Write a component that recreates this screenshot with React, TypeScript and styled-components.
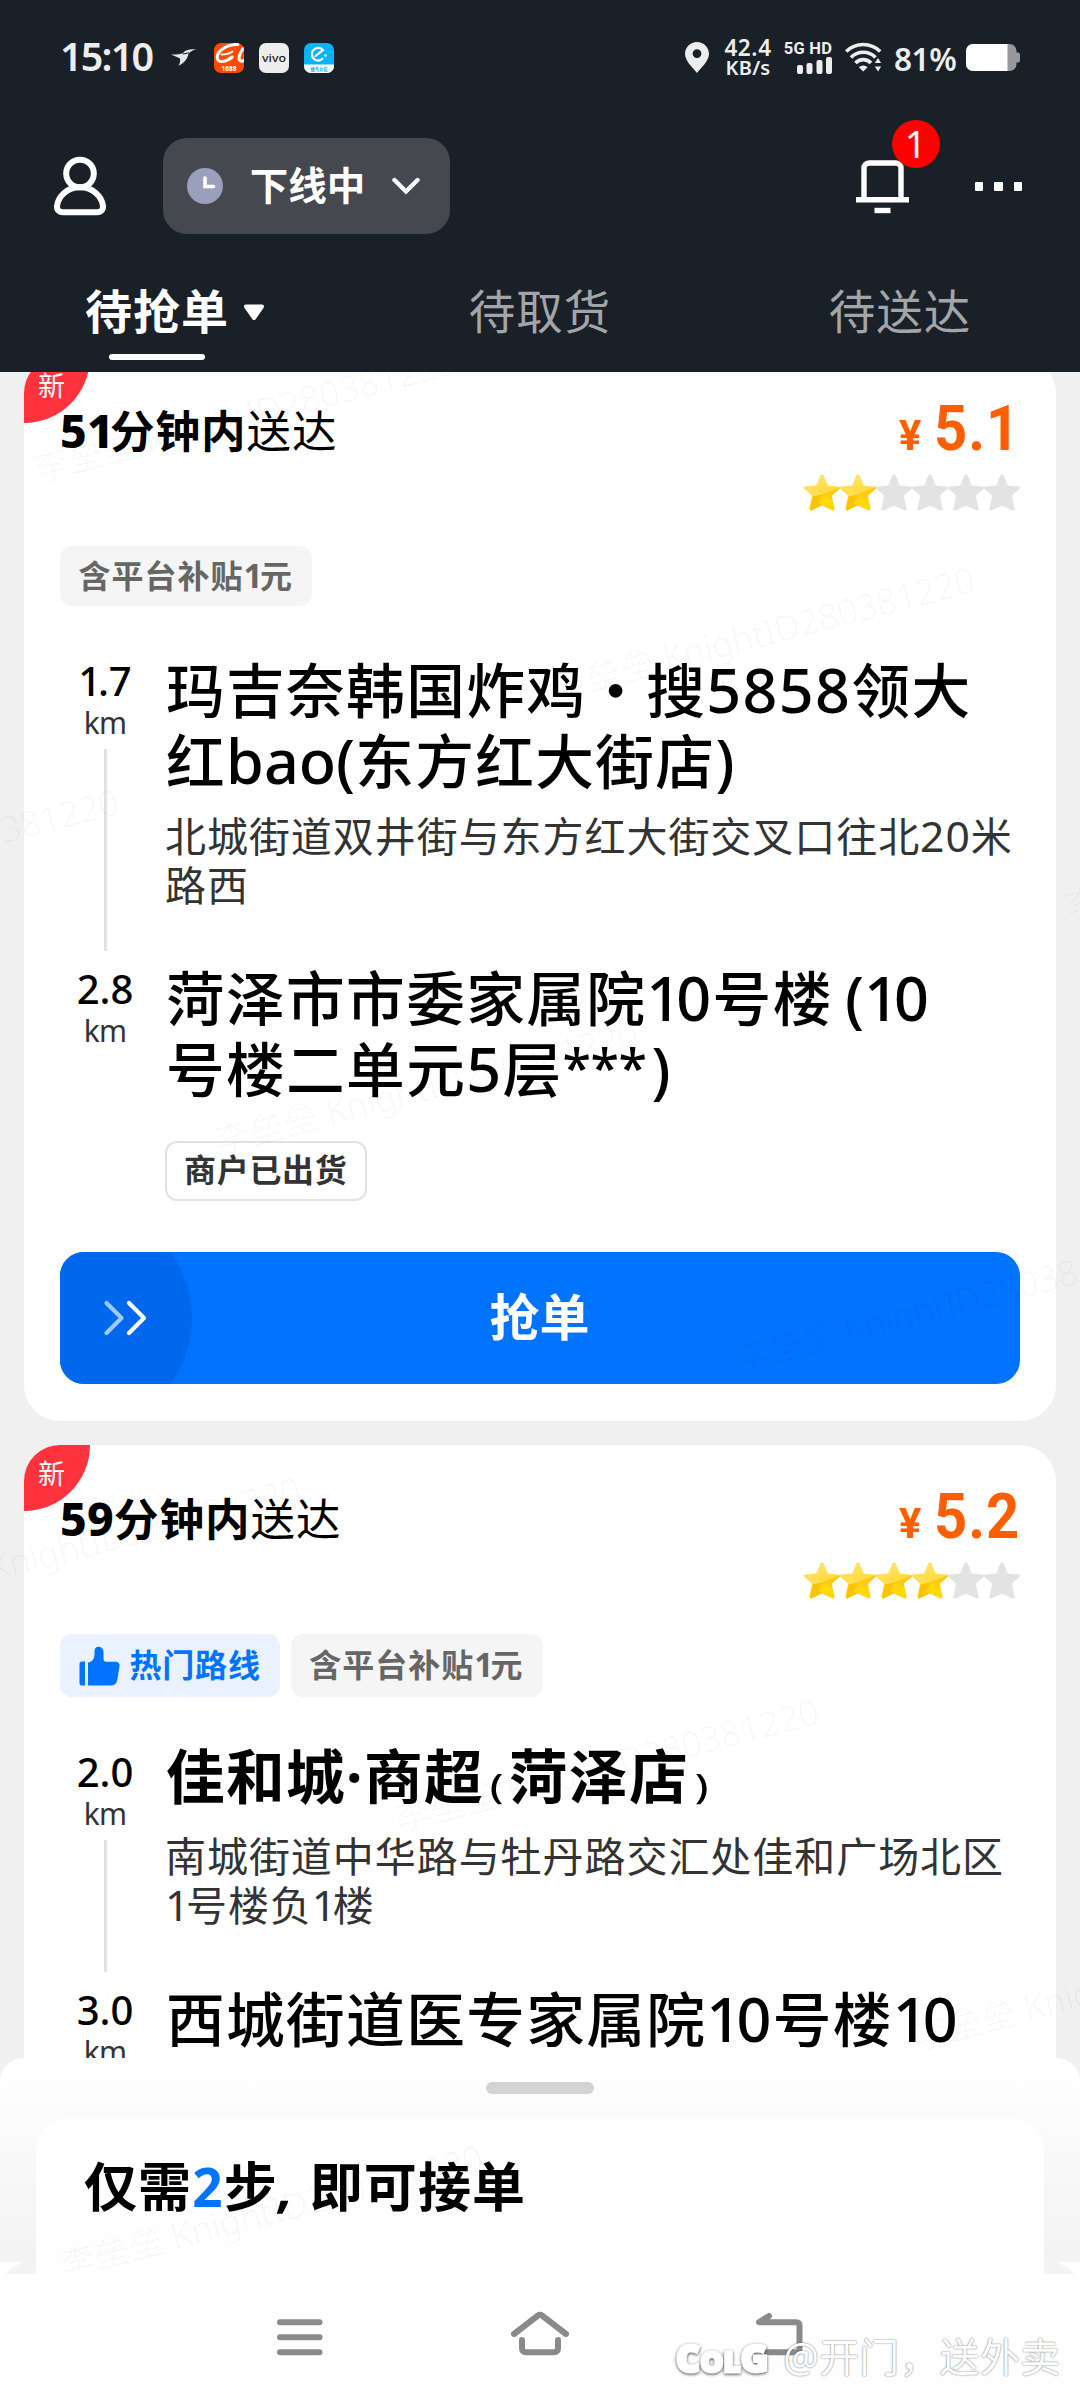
import React from "react";
import styled, { createGlobalStyle } from "styled-components";

const Global = createGlobalStyle`
  * { box-sizing: border-box; }
  html, body { margin: 0; padding: 0; background: #fff; }
  body {
    font-family: "Noto Sans", "Noto Sans CJK SC", sans-serif;
    -webkit-font-smoothing: antialiased;
  }
  svg { display: block; flex: none; }
`;

const Screen = styled.div`
  position: relative;
  width: 1080px;
  height: 2400px;
  overflow: hidden;
  display: flex;
  flex-direction: column;
  background: #f0f0f0;
`;

/* ---------- mixed script text ---------- */

const Latin = styled.span`
  font-size: 1.04em;
  line-height: 1;
`;

const One = styled.span`
  letter-spacing: -0.08em;
`;

const Letters = styled.span`
  letter-spacing: 0;
`;

const Asterisks = styled.span`
  display: inline-block;
  margin-right: 5px;
  font-size: 0.85em;
  line-height: 1;
  letter-spacing: -0.4px;
  transform: translateY(-5px);
`;

function Mix({ children }: { children: string }) {
  return (
    <>
      {children.split(/([\x20-\x7e]+)/).map((run, i) =>
        i % 2 ? (
          <Latin key={i}>
            {run.split(/(1|[a-z(]+|\*+)/).map((c, j) => {
              if (c === "1") return <One key={j}>1</One>;
              if (c.startsWith("*")) return <Asterisks key={j}>{c}</Asterisks>;
              return j % 2 ? <Letters key={j}>{c}</Letters> : c;
            })}
          </Latin>
        ) : (
          run
        )
      )}
    </>
  );
}

/* ---------- header ---------- */

const Header = styled.header`
  position: relative;
  z-index: 2;
  height: 372px;
  flex: none;
  display: flex;
  flex-direction: column;
  background: #1a2028;
  color: #fff;
`;

const StatusBar = styled.div`
  height: 114px;
  padding: 0 60px 0 60px;
  display: flex;
  justify-content: space-between;
  align-items: center;
  color: #ededed;
`;

const StatusGroup = styled.div`
  display: flex;
  align-items: center;
`;

const Clock = styled.span`
  width: 111px;
  margin-top: -3px;
  font-size: 39.5px;
  line-height: 50px;
  font-weight: 600;
  letter-spacing: -1.8px;
  white-space: nowrap;
`;

const AppIcons = styled.div`
  display: flex;
  gap: 15px;
  margin: 2px 0 0 17px;
`;

const AppIcon = styled.div<{ $bg: string }>`
  width: 30px;
  height: 30px;
  border-radius: 7px;
  overflow: hidden;
  background: ${(p) => p.$bg};
`;

const NetStack = styled.div<{ $width: number; $left: number }>`
  width: ${(p) => p.$width}px;
  margin-left: ${(p) => p.$left}px;
  display: flex;
  flex-direction: column;
  align-items: center;
  white-space: nowrap;
  font-weight: 600;
`;

const Speed = styled.span`
  font-size: 22.5px;
  line-height: 20px;
  letter-spacing: 0.6px;
`;

const SpeedUnit = styled.span`
  font-size: 20px;
  line-height: 19px;
  letter-spacing: 0.2px;
`;

const NetType = styled.span`
  font-family: Roboto, "Noto Sans", sans-serif;
  font-size: 16.5px;
  line-height: 16px;
  font-weight: 700;
  letter-spacing: 0.3px;
`;

const Percent = styled.span`
  margin: 4px 0 0 12px;
  width: 72px;
  font-size: 31.5px;
  line-height: 40px;
  font-weight: 600;
  letter-spacing: -0.4px;
  white-space: nowrap;
`;

const Toolbar = styled.div`
  height: 144px;
  padding: 0 58px 0 53px;
  display: flex;
  align-items: center;
`;

const StatusPill = styled.button`
  margin-left: 56px;
  width: 287px;
  height: 96px;
  border: 0;
  padding: 0 30px 0 24px;
  border-radius: 24px;
  background: #46484f;
  color: #fff;
  font-family: inherit;
  font-size: 38.5px;
  line-height: 56px;
  font-weight: 700;
  display: flex;
  align-items: center;
  justify-content: space-between;
`;

const PillText = styled.span`
  margin-top: -2px;
`;

const BellWrap = styled.div`
  position: relative;
  margin: 1px 66px 0 auto;
`;

const Count = styled.span`
  position: absolute;
  left: 36px;
  top: -40px;
  width: 48px;
  height: 48px;
  border-radius: 50%;
  background: #fe0000;
  font-size: 38px;
  line-height: 47px;
  text-align: center;
`;

const Dots = styled.div`
  display: flex;
  gap: 11px;
  margin-top: 1px;
  i {
    width: 8.5px;
    height: 9px;
    background: #fff;
    border-radius: 1px;
  }
`;

const Tabs = styled.nav`
  height: 114px;
  display: grid;
  grid-template-columns: repeat(3, 360px);
`;

const Tab = styled.div<{ $active?: boolean }>`
  display: flex;
  justify-content: center;
  padding: 17px ${(p) => (p.$active ? 10 : 0)}px 0 0;
  font-size: ${(p) => (p.$active ? 47 : 46.5)}px;
  line-height: 72px;
  letter-spacing: 1px;
  font-weight: ${(p) => (p.$active ? 700 : 400)};
  color: ${(p) => (p.$active ? "#fff" : "#a3a6a9")};
  svg { margin: 29px 0 0 14px; }
`;

const TabLabel = styled.div`
  display: flex;
  flex-direction: column;
  align-items: center;
`;

const Underline = styled.i`
  width: 96px;
  height: 6px;
  margin-top: 7px;
  border-radius: 3px;
  background: #fff;
`;

/* ---------- order cards ---------- */

const List = styled.main`
  height: 1710px;
  flex: none;
  overflow: hidden;
  padding: 0 24px;
  display: flex;
  flex-direction: column;
  gap: 24px;
  > :first-child { margin-top: -15px; }
`;

const Card = styled.section`
  position: relative;
  flex: none;
  padding: 0 36px 37px;
  border-radius: 36px;
  background: #fff;
  color: #000;
`;

const NewFlag = styled.span`
  position: absolute;
  left: 0;
  top: 0;
  width: 66px;
  height: 66px;
  padding-left: 14px;
  border-radius: 36px 0 66px 0;
  background: #ff333d;
  color: #fff;
  font-size: 27px;
  line-height: 58px;
  font-weight: 400;
`;

const CardHead = styled.div`
  height: 189px;
  display: flex;
  justify-content: space-between;
`;

const Deadline = styled.h2`
  position: relative;
  margin: 0;
  padding-top: 44px;
  font-size: 44.5px;
  line-height: 60px;
  letter-spacing: 1px;
  font-weight: 400;
  white-space: nowrap;
`;

const Strong = styled.span`
  font-weight: 700;
  ${Latin} { font-weight: 800; letter-spacing: 0.2px; }
`;

const Reward = styled.div`
  padding-top: 40px;
  display: flex;
  flex-direction: column;
  align-items: flex-end;
`;

const Price = styled.div`
  width: 121px;
  height: 64px;
  display: flex;
  align-items: baseline;
  color: #ff5e00;
  font-family: Roboto, "Noto Sans", sans-serif;
  font-weight: 700;
  line-height: 64px;
`;

const Yen = styled.span`
  flex: none;
  width: 35px;
  font-size: 42px;
`;

const Amount = styled.span`
  flex: none;
  font-size: 63px;
  letter-spacing: 1px;
  transform: scaleX(0.92);
  transform-origin: left;
`;

const Stars = styled.div`
  display: flex;
  margin-top: 13px;
`;

const Tags = styled.div`
  display: flex;
  gap: 11px;
`;

const Tag = styled.span<{ $hot?: boolean; $tall?: boolean }>`
  height: ${(p) => (p.$tall ? 63 : 60)}px;
  padding: 0 19px 1px 18.5px;
  border-radius: 12px;
  display: flex;
  align-items: center;
  gap: 10px;
  background: ${(p) => (p.$hot ? "#ebf2ff" : "#f5f5f5")};
  color: ${(p) => (p.$hot ? "#0074ff" : "#666")};
  font-size: 32px;
  line-height: 48px;
  letter-spacing: ${(p) => (p.$hot ? 0.8 : 1)}px;
  font-weight: 700;
  white-space: nowrap;
  svg { margin-top: 2px; }
`;

const Route = styled.div`
  margin-top: 49px;
`;

const Stop = styled.div`
  display: flex;
  gap: 15px;
`;

const Distance = styled.div`
  width: 90px;
  padding-top: 2px;
  display: flex;
  flex-direction: column;
  align-items: center;
`;

const Kilometres = styled.span`
  font-size: 38.5px;
  line-height: 49px;
  font-weight: 500;
`;

const Unit = styled.span`
  font-size: 30px;
  line-height: 34px;
  letter-spacing: -0.8px;
  color: #333;
`;

const Thread = styled.i`
  flex: 1;
  width: 3px;
  margin: 9px 0 12px;
  background: #e2e2e2;
`;

const Place = styled.div<{ $gap?: number }>`
  padding: 0 0 ${(p) => p.$gap ?? 0}px;
  white-space: nowrap;
`;

const PlaceName = styled.h3<{ $bold?: boolean }>`
  margin: 0 0 ${(p) => (p.$bold ? 25 : 15)}px;
  padding-left: 1px;
  font-size: 58.7px;
  line-height: ${(p) => (p.$bold ? 61 : 71)}px;
  letter-spacing: 1.35px;
  word-spacing: -5px;
  font-weight: ${(p) => (p.$bold ? 700 : 500)};
`;

const Line = styled.span<{ $height: number }>`
  display: block;
  height: ${(p) => p.$height}px;
`;

const SmallParen = styled.span`
  display: inline-block;
  width: 25px;
  font-size: 35px;
  line-height: 1;
  font-weight: 500;
  text-align: center;
  letter-spacing: 0;
  transform: scaleX(1.25);
`;

const BoldLine = styled.span`
  display: block;
  height: 61px;
`;

const Address = styled.p`
  margin: 0;
  font-size: 41px;
  line-height: 49px;
  letter-spacing: 0.95px;
  color: #333;
`;

const ReadyBadge = styled.span`
  display: flex;
  align-items: center;
  width: 202px;
  height: 60px;
  margin-top: 36px;
  padding: 0 0 2px 17px;
  border: 2px solid #e2e2e2;
  border-radius: 12px;
  color: #333;
  font-size: 32px;
  line-height: 48px;
  letter-spacing: 0.7px;
  font-weight: 700;
`;

const GrabButton = styled.button`
  display: flex;
  align-items: center;
  width: 960px;
  height: 132px;
  margin-top: 51px;
  padding: 0;
  border: 0;
  border-radius: 24px;
  overflow: hidden;
  background: #0073ff;
  color: #fff;
  font-family: inherit;
  font-size: 50px;
  line-height: 72px;
  font-weight: 700;
`;

const GrabHandle = styled.span`
  width: 132px;
  height: 132px;
  display: flex;
  align-items: center;
  padding-left: 43px;
  background: #0068ed;
  clip-path: circle(112px at 20px 50%);
`;

const GrabLabel = styled.span`
  flex: 1;
  padding: 0 133px 2px 0;
  text-align: center;
`;

/* ---------- bottom sheet ---------- */

const Sheet = styled.section`
  position: relative;
  z-index: 1;
  height: 216px;
  margin-top: -24px;
  flex: none;
  background: #fff;
  border-radius: 24px 24px 0 0;
`;

const SheetBody = styled.div`
  height: 204px;
  border-radius: 24px 24px 0 0;
  padding: 24px 36px 0;
  display: flex;
  flex-direction: column;
  align-items: center;
  background: linear-gradient(#fff 0, #fdfdfd 30px, #f3f3f3 200px);
`;

const SheetFoot = styled.div`
  height: 12px;
  overflow: hidden;
  display: flex;
  justify-content: center;
  &::before {
    content: "";
    width: 100%;
    height: 60px;
    border-radius: 30px 30px 0 0;
    background: linear-gradient(90deg, #f3f3f3 36px, #fefefe 36px, #fefefe 1044px, #f3f3f3 1044px);
  }
`;

const Grip = styled.i`
  flex: none;
  width: 108px;
  height: 12px;
  border-radius: 6px;
  background: #d3d3d3;
`;

const StepPanel = styled.div`
  flex: none;
  width: 1008px;
  height: 144px;
  margin-top: 24px;
  padding: 33px 0 0 48px;
  border-radius: 30px 30px 0 0;
  background: #fefefe;
  font-size: 53px;
  line-height: 72px;
  letter-spacing: 1.1px;
  font-weight: 700;
  white-space: nowrap;
  em { font-style: normal; color: #0074ff; }
`;

const Comma = styled.span`
  display: inline-block;
  width: 32px;
  line-height: 1;
  transform: skewX(-6deg);
`;

/* ---------- system navigation ---------- */

const NavBar = styled.footer`
  position: relative;
  z-index: 2;
  height: 126px;
  flex: none;
  display: flex;
  justify-content: space-between;
  padding: 36px 274px 0 274px;
  background: #fefefe;
`;

const Credit = styled.div`
  position: absolute;
  left: 676px;
  top: 53px;
  display: flex;
  align-items: center;
  color: #fff;
  white-space: nowrap;
`;

const CreditLogo = styled.span`
  width: 107px;
  padding-top: 5px;
  font-family: "Noto Sans", sans-serif;
  font-size: 37px;
  line-height: 52px;
  font-weight: 900;
  letter-spacing: 0.2px;
  -webkit-text-stroke: 3px #fff;
  paint-order: stroke fill;
  filter: drop-shadow(0 1px 1.5px rgba(0, 0, 0, 0.7));
  small { font-size: 29px; }
`;

const CreditName = styled.span`
  font-size: 40px;
  line-height: 56px;
  letter-spacing: 0.2px;
  text-shadow: 0 0 2px rgba(0, 0, 0, 0.45), 0 0 1px rgba(0, 0, 0, 0.3);
`;

/* ---------- security overlay ---------- */

const Overlay = styled.div`
  position: absolute;
  inset: 0 0 126px 0;
  z-index: 3;
  overflow: hidden;
  pointer-events: none;
`;

const Stamp = styled.span<{ $x: number; $y: number }>`
  position: absolute;
  left: ${(p) => p.$x + 3}px;
  top: ${(p) => p.$y - 40}px;
  font-size: 35.2px;
  line-height: 40px;
  font-weight: 300;
  white-space: nowrap;
  color: rgba(0, 0, 0, 0.04);
  transform: rotate(-14.5deg);
  transform-origin: 0 100%;
`;

const STAMPS: [number, number][] = [
  [890, 268],
  [36, 488], [554, 706], [1068, 926],
  [-302, 928], [217, 1160], [735, 1378],
  [-120, 1616], [398, 1838], [915, 2056], [62, 2284],
];

/* ---------- drawings ---------- */

const Swallow = () => (
  <svg width="26" height="17" viewBox="0 0 26 17" fill="#e6e6e6">
    <path d="M0 5.500c5 .2 9-.4 12-1.200C14 1 17 0 26 0.200c-4 .6-6 1.600-8.500 4.600-.8 4.500-3.500 9-10 12 1.500-3 2-5 1.500-7.300C6.500 8.300 3 7 0 5.500z" />
    <path d="M12 5l6-1.200" stroke="#1a2028" strokeWidth="1" />
  </svg>
);

const MarketMark = () => (
  <svg width="30" height="30" viewBox="0 0 30 30">
    <g fill="none" stroke="#fff" strokeLinecap="round">
      <path d="M24 1.500C13 1 3 8 3.200 14.500c.2 6 9 4.500 15-.5" strokeWidth="3" />
      <path d="M7.500 11.500c4 0 9-1.500 11-3" strokeWidth="2" />
      <path d="M31 3.500c-4 4-7 10-5.500 13.500.8 1.800 3 1.500 5 0" strokeWidth="3" />
    </g>
    <text x="15" y="28" fill="#fff" fontSize="6.500" fontWeight="700" textAnchor="middle">1688</text>
  </svg>
);

const VivoMark = () => (
  <svg width="30" height="30" viewBox="0 0 30 30">
    <text x="15" y="18.500" fill="#222" fontSize="10" fontWeight="500" textAnchor="middle" textLength="24" lengthAdjust="spacingAndGlyphs">vivo</text>
  </svg>
);

const RiderMark = () => (
  <svg width="30" height="30" viewBox="0 0 30 30">
    <path d="M0 21.500h30V30H0z" fill="#fff" />
    <path d="M18.500 15.800A6.300 6.300 0 1 1 19 7.200L11.500 13" fill="none" stroke="#fff" strokeWidth="2.200" strokeLinecap="round" />
    <circle cx="21.500" cy="12.500" r="1.300" fill="#fff" />
    <text x="15" y="28" fill="#06b0f5" fontSize="5" fontWeight="700" textAnchor="middle" textLength="17" lengthAdjust="spacingAndGlyphs">蜂鸟众包</text>
  </svg>
);

const Pin = () => (
  <svg width="24" height="31" viewBox="0 0 24 31">
    <path fillRule="evenodd" fill="#ededed" d="M12 0C5.400 0 0 5.200 0 11.800 0 19 8 26 12 31c4-5 12-12 12-19.200C24 5.200 18.600 0 12 0zm0 7.200a4.400 4.400 0 1 1 0 8.800 4.400 4.400 0 0 1 0-8.800z" />
  </svg>
);

const Signal = () => (
  <svg width="48" height="17" viewBox="0 0 48 17" fill="#ededed">
    <rect x="13" y="8" width="6" height="9" rx="2" />
    <rect x="22.500" y="6" width="6" height="11" rx="2" />
    <rect x="32.500" y="3" width="6" height="14" rx="2" />
    <rect x="42" y="0" width="6" height="17" rx="2" />
  </svg>
);

const Wifi = () => (
  <svg width="37" height="30" viewBox="0 0 37 30">
    <g fill="none" stroke="#ededed" strokeWidth="3.600">
      <path d="M1.200 9.500a24 24 0 0 1 34 0" />
      <path d="M6 15.500a17 17 0 0 1 24.500 0" />
      <path d="M10.500 21a10.500 10.500 0 0 1 15.500 0" />
    </g>
    <path d="M18.200 29.500l-4.400-4.200a6 6 0 0 1 8.800 0z" fill="#ededed" />
    <path d="M29 20h8v10h-8z" fill="#1a2028" />
    <path d="M33 16l3.200 5h-6.400zM33 29.500l3.200-5h-6.400z" fill="#ededed" />
  </svg>
);

const Battery = () => (
  <svg width="54" height="27" viewBox="0 0 54 27">
    <rect width="50.500" height="27" rx="7" fill="#98999c" />
    <path d="M50 8.500h2a2 2 0 0 1 2 2v6a2 2 0 0 1-2 2h-2z" fill="#98999c" />
    <path d="M7 0h34.500v27H7a7 7 0 0 1-7-7V7a7 7 0 0 1 7-7z" fill="#fff" />
  </svg>
);

const User = () => (
  <svg width="54" height="60" viewBox="0 0 54 60" fill="none" stroke="#fff" strokeWidth="6">
    <circle cx="27" cy="17.500" r="13.800" />
    <path d="M27 31.300c13 0 21.500 9 22.900 18 .6 4.300-1.700 7-5.900 7H10c-4.200 0-6.500-2.700-5.900-7 1.400-9 9.900-18 22.900-18z" />
  </svg>
);

const ClockFace = () => (
  <svg width="36" height="36" viewBox="0 0 36 36">
    <circle cx="18" cy="18" r="18" fill="#9a9fbb" />
    <path d="M18 10v8.500h8.500" fill="none" stroke="#fff" strokeWidth="3.600" strokeLinecap="round" />
  </svg>
);

const ChevronDown = () => (
  <svg width="28" height="18" viewBox="0 0 28 18">
    <path d="M2.500 3L14 14.500 25.500 3" fill="none" stroke="#fff" strokeWidth="4.400" strokeLinecap="round" />
  </svg>
);

const Bell = () => (
  <svg width="53" height="54" viewBox="0 0 53 54" fill="none" stroke="#fff">
    <path d="M8 38V8.500a5 5 0 0 1 5-5.500h27a5 5 0 0 1 5 5.500V38" strokeWidth="5.400" />
    <path d="M0 39.700h53" strokeWidth="5.400" />
    <path d="M18.500 50.500h16" strokeWidth="5.400" />
  </svg>
);

const Caret = () => (
  <svg width="22" height="18" viewBox="0 0 22 18">
    <path d="M3 2.500h16L11 14z" fill="#fff" stroke="#fff" strokeWidth="4" strokeLinejoin="round" />
  </svg>
);

const STAR = "M18 .5c1 0 1.700.9 2.200 2.200l3.600 8.800 10.700 1c1.800.2 2.200 1.400.9 2.600l-7.600 6.600 2.700 12.300c.4 2-.7 2.900-2.500 2.200L18 31.600l-10 4.600c-1.800.7-2.900-.2-2.500-2.200l2.700-12.300L.6 15.100c-1.300-1.200-.9-2.400.9-2.600l10.700-1 3.600-8.800C16.300 1.400 17 .5 18 .5z";

const Star = ({ on, id }: { on: boolean; id: string }) => (
  <svg width="36" height="37" viewBox="0 0 36 37">
    <defs>
      <clipPath id={id}><path d={STAR} /></clipPath>
      <linearGradient id={id + "g"} x1="0" y1="0" x2="0" y2="1">
        <stop offset="0" stopColor="#ffe372" />
        <stop offset="1" stopColor="#ffd30a" />
      </linearGradient>
    </defs>
    {on ? (
      <g clipPath={`url(#${id})`}>
        <path d="M0 0h36v37H0z" fill={`url(#${id}g)`} />
        <path d="M18 20.500L36 13v9L27 26z" fill="#ffca10" />
        <path d="M18 20.500l-9 3L0 13l9-1.500z" fill="#ffdf55" />
        <path d="M18 20.500l-9.500 2L6 37l12-6z" fill="#fbc400" />
        <path d="M18 20.500V31l13 6-4-11.500z" fill="#ffd900" />
        <path d="M18 20.500l-4.500 9L18 31z" fill="#ffd01a" />
      </g>
    ) : (
      <path d={STAR} fill="#e3e3e3" />
    )}
  </svg>
);

const Thumb = () => (
  <svg width="41" height="40" viewBox="0 0 41 40" fill="#0074ff">
    <path d="M3 15.500h3v24H3a2.500 2.500 0 0 1-2.500-2.500V18A2.500 2.500 0 0 1 3 15.500z" />
    <path d="M9 39.500V16.500c4.500-.5 6.500-4 6.500-8V5C15.500 2.500 17 .8 19.300.8c3 0 5 2.200 5.200 5.200v7c0 1.800 1 2.800 2.800 2.800h9.200c2.800 0 4.500 1.800 4 4.500l-2.300 14c-.6 3.300-2.500 5.200-5.700 5.200z" />
  </svg>
);

const DoubleChevron = () => (
  <svg width="44" height="36" viewBox="0 0 44 36" fill="none" strokeWidth="4.200" strokeLinecap="round" strokeLinejoin="round">
    <path d="M3.500 3L18.500 18 3.500 33" stroke="#9cc9ff" />
    <path d="M26 3L41 18 26 33" stroke="#fff" />
  </svg>
);

const NavMenu = () => (
  <svg width="52" height="48" viewBox="0 0 52 48">
    <path d="M6 12.200h39.500M6 27.200h39.500M6 42.200h39.500" stroke="#8a8a8a" strokeWidth="6" strokeLinecap="round" />
  </svg>
);

const NavHome = () => (
  <svg width="60" height="48" viewBox="0 0 60 48" fill="none" stroke="#8a8a8a" strokeWidth="6" strokeLinecap="round">
    <path d="M4 24L28 5.500q2-1.500 4 0L56 24" />
    <path d="M12 30v8q0 4.200 4.200 4.200h27.600q4.200 0 4.200-4.200v-8" />
  </svg>
);

const NavBack = () => (
  <svg width="52" height="48" viewBox="0 0 52 48" fill="none" stroke="#8a8a8a" strokeWidth="6" strokeLinecap="round" strokeLinejoin="round">
    <path d="M15 6L5 12.200h37q3.500 0 3.500 3.500v23q0 3.500-3.500 3.500H13" />
  </svg>
);

/* ---------- composed parts ---------- */

type HeadProps = { id: string; limit: string; price: string; stars: number };

function OrderHead({ id, limit, price, stars }: HeadProps) {
  return (
    <>
      <NewFlag>新</NewFlag>
      <CardHead>
        <Deadline>
          <Strong><Mix>{limit}</Mix></Strong>送达
        </Deadline>
        <Reward>
          <Price>
            <Yen>¥</Yen>
            <Amount>{price}</Amount>
          </Price>
          <Stars>
            {Array.from({ length: 6 }, (_, i) => (
              <Star key={i} id={`${id}-${i}`} on={i < stars} />
            ))}
          </Stars>
        </Reward>
      </CardHead>
    </>
  );
}

function Leg({ km, thread }: { km: string; thread?: boolean }) {
  return (
    <Distance>
      <Kilometres><Mix>{km}</Mix></Kilometres>
      <Unit>km</Unit>
      {thread && <Thread />}
    </Distance>
  );
}

const lines = (rows: string[], height: number) =>
  rows.map((r) => <Line key={r} $height={height}><Mix>{r}</Mix></Line>);

export default function App() {
  return (
    <Screen>
      <Global />
      <Header>
        <StatusBar>
          <StatusGroup>
            <Clock>15:10</Clock>
            <Swallow />
            <AppIcons>
              <AppIcon $bg="#ff4a00"><MarketMark /></AppIcon>
              <AppIcon $bg="#ededed"><VivoMark /></AppIcon>
              <AppIcon $bg="#06b4fb"><RiderMark /></AppIcon>
            </AppIcons>
          </StatusGroup>
          <StatusGroup>
            <Pin />
            <NetStack $width={48} $left={15}>
              <Speed>42.4</Speed>
              <SpeedUnit>KB/s</SpeedUnit>
            </NetStack>
            <NetStack $width={48} $left={12}>
              <NetType>5G HD</NetType>
              <Signal />
            </NetStack>
            <NetStack $width={37} $left={13}><Wifi /></NetStack>
            <Percent>81%</Percent>
            <Battery />
          </StatusGroup>
        </StatusBar>
        <Toolbar>
          <User />
          <StatusPill>
            <ClockFace />
            <PillText>下线中</PillText>
            <ChevronDown />
          </StatusPill>
          <BellWrap>
            <Bell />
            <Count>1</Count>
          </BellWrap>
          <Dots><i /><i /><i /></Dots>
        </Toolbar>
        <Tabs>
          <Tab $active>
            <TabLabel>
              待抢单
              <Underline />
            </TabLabel>
            <Caret />
          </Tab>
          <Tab>待取货</Tab>
          <Tab>待送达</Tab>
        </Tabs>
      </Header>

      <List>
        <Card>
          <OrderHead id="a" limit="51分钟内" price="5.1" stars={2} />
          <Tags>
            <Tag><span><Mix>含平台补贴1元</Mix></span></Tag>
          </Tags>
          <Route>
            <Stop>
              <Leg km="1.7" thread />
              <Place $gap={53}>
                <PlaceName>{lines(["玛吉奈韩国炸鸡・搜5858领大", "红bao(东方红大街店)"], 71)}</PlaceName>
                <Address>{lines(["北城街道双井街与东方红大街交叉口往北20米", "路西"], 49)}</Address>
              </Place>
            </Stop>
            <Stop>
              <Leg km="2.8" />
              <Place>
                <PlaceName>{lines(["菏泽市市委家属院10号楼 (10", "号楼二单元5层***)"], 71)}</PlaceName>
                <ReadyBadge>商户已出货</ReadyBadge>
              </Place>
            </Stop>
          </Route>
          <GrabButton>
            <GrabHandle><DoubleChevron /></GrabHandle>
            <GrabLabel>抢单</GrabLabel>
          </GrabButton>
        </Card>

        <Card>
          <OrderHead id="b" limit="59分钟内" price="5.2" stars={4} />
          <Tags>
            <Tag $hot $tall><Thumb />热门路线</Tag>
            <Tag $tall><span><Mix>含平台补贴1元</Mix></span></Tag>
          </Tags>
          <Route>
            <Stop>
              <Leg km="2.0" thread />
              <Place $gap={54}>
                <PlaceName $bold>
                  <BoldLine>
                    佳和城·商超<SmallParen>(</SmallParen>菏泽店<SmallParen>)</SmallParen>
                  </BoldLine>
                </PlaceName>
                <Address>{lines(["南城街道中华路与牡丹路交汇处佳和广场北区", "1号楼负1楼"], 49)}</Address>
              </Place>
            </Stop>
            <Stop>
              <Leg km="3.0" />
              <Place>
                <PlaceName>{lines(["西城街道医专家属院10号楼10"], 71)}</PlaceName>
              </Place>
            </Stop>
          </Route>
        </Card>
      </List>

      <Sheet>
        <SheetBody>
          <Grip />
          <StepPanel>
            仅需<em>2</em>步<Comma>,</Comma>即可接单
          </StepPanel>
        </SheetBody>
        <SheetFoot />
      </Sheet>

      <NavBar>
        <NavMenu />
        <NavHome />
        <NavBack />
        <Credit>
          <CreditLogo>C<small>OL</small>G</CreditLogo>
          <CreditName>@开门，送外卖</CreditName>
        </Credit>
      </NavBar>

      <Overlay>
        {STAMPS.map(([x, y]) => (
          <Stamp key={`${x}-${y}`} $x={x} $y={y}>李垒垒 KnightID280381220</Stamp>
        ))}
      </Overlay>
    </Screen>
  );
}
